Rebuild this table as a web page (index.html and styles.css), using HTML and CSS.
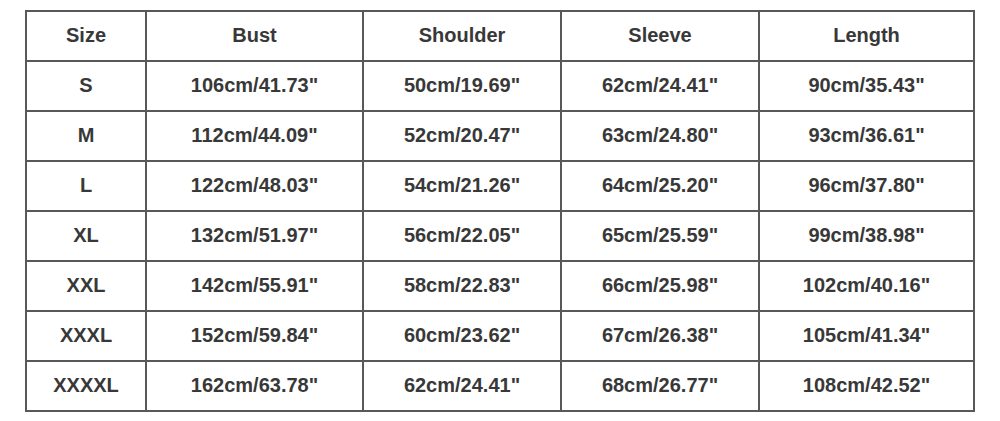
FILE: index.html
```html
<!DOCTYPE html>
<html>
<head>
<meta charset="utf-8">
<link rel="stylesheet" href="styles.css">
</head>
<body>
<table class="size-table">
  <colgroup>
    <col class="c1"><col class="c2"><col class="c3"><col class="c4"><col class="c5">
  </colgroup>
  <tr><th>Size</th><th>Bust</th><th>Shoulder</th><th>Sleeve</th><th>Length</th></tr>
  <tr><td>S</td><td>106cm/41.73"</td><td>50cm/19.69"</td><td>62cm/24.41"</td><td>90cm/35.43"</td></tr>
  <tr><td>M</td><td>112cm/44.09"</td><td>52cm/20.47"</td><td>63cm/24.80"</td><td>93cm/36.61"</td></tr>
  <tr><td>L</td><td>122cm/48.03"</td><td>54cm/21.26"</td><td>64cm/25.20"</td><td>96cm/37.80"</td></tr>
  <tr><td>XL</td><td>132cm/51.97"</td><td>56cm/22.05"</td><td>65cm/25.59"</td><td>99cm/38.98"</td></tr>
  <tr><td>XXL</td><td>142cm/55.91"</td><td>58cm/22.83"</td><td>66cm/25.98"</td><td>102cm/40.16"</td></tr>
  <tr><td>XXXL</td><td>152cm/59.84"</td><td>60cm/23.62"</td><td>67cm/26.38"</td><td>105cm/41.34"</td></tr>
  <tr><td>XXXXL</td><td>162cm/63.78"</td><td>62cm/24.41"</td><td>68cm/26.77"</td><td>108cm/42.52"</td></tr>
</table>
</body>
</html>
```
FILE: styles.css
```css
html, body {
  margin: 0;
  padding: 0;
  background: #ffffff;
}
body {
  padding: 10px 0 0 25px;
}
.size-table {
  border-collapse: collapse;
  table-layout: fixed;
  width: 948px;
  font-family: "Liberation Sans", Arial, sans-serif;
  font-weight: bold;
  font-size: 20px;
  line-height: 22px;
  color: #383838;
}
.c1 { width: 120px; }
.c2 { width: 217px; }
.c3 { width: 198px; }
.c4 { width: 198px; }
.c5 { width: 215px; }
.size-table th,
.size-table td {
  border: 2px solid #585858;
  height: 46px;
  padding: 0 0 2px 0;
  text-align: center;
  vertical-align: middle;
  font-weight: bold;
}
```
